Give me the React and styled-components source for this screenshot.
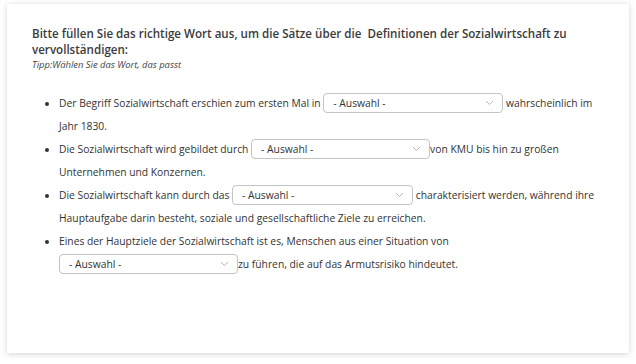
import React from 'react'
import styled, { createGlobalStyle } from 'styled-components'

const GlobalStyle = createGlobalStyle`
  html, body { margin: 0; padding: 0; background: #fff; }
  body { font-family: "Open Sans", "Liberation Sans", sans-serif; }
`

const options = ['- Auswahl -']

const Chevron = () => (
  <svg width="9" height="6" viewBox="0 0 9 6" fill="none">
    <path d="M1 1l3.5 3.5L8 1" stroke="#b5b5b5" strokeWidth="1" />
  </svg>
)

const Choice = ({ width = 180 }) => (
  <SelectBox style={{ width }}>
    <span>{options[0]}</span>
    <Chevron />
  </SelectBox>
)

const App = () => (
  <Page>
    <GlobalStyle />
    <Card>
      <Title>
        Bitte füllen Sie das richtige Wort aus, um die Sätze über die&nbsp; Definitionen der Sozialwirtschaft zu vervollständigen:
      </Title>
      <Tip>Tipp:Wählen Sie das Wort, das passt</Tip>
      <List>
        <Item>
          Der Begriff Sozialwirtschaft erschien zum ersten Mal in <Choice /> wahrscheinlich im Jahr 1830.
        </Item>
        <Item>
          Die Sozialwirtschaft wird gebildet durch <Choice width={179} />von KMU bis hin zu großen Unternehmen und Konzernen.
        </Item>
        <Item>
          Die Sozialwirtschaft kann durch das <Choice width={181} /> charakterisiert werden, während ihre Hauptaufgabe darin besteht, soziale und gesellschaftliche Ziele zu erreichen.
        </Item>
        <Item>
          Eines der Hauptziele der Sozialwirtschaft ist es, Menschen aus einer Situation von <Choice width={179} />zu führen, die auf das Armutsrisiko hindeutet.
        </Item>
      </List>
    </Card>
  </Page>
)

export default App

const Page = styled.div`
  width: 636px;
  height: 364px;
  padding: 4px 7px 0 7px;
  box-sizing: border-box;
`

const Card = styled.div`
  height: 349px;
  background: #fff;
  box-shadow: 0 1px 6px rgba(0, 0, 0, 0.18);
  padding: 22px 26px 0 25px;
  box-sizing: border-box;
`

const Title = styled.div`
  font-size: 11.6px;
  font-weight: 600;
  color: #3b3b3b;
  line-height: 16px;
`

const Tip = styled.div`
  font-size: 9.4px;
  font-style: italic;
  font-weight: 400;
  color: #444;
  line-height: 13px;
`

const List = styled.ul`
  margin: 21px 0 0 0;
  padding: 0 0 0 27px;
  font-size: 10.3px;
  color: #333;
  line-height: 23px;
`

const Item = styled.li`
  margin: 0;
  &::marker { font-size: 10px; }
`

const SelectBox = styled.span`
  display: inline-flex;
  align-items: center;
  justify-content: space-between;
  height: 20px;
  box-sizing: border-box;
  padding: 0 8px 0 9px;
  border: 1px solid #c4c4c4;
  border-radius: 4px;
  vertical-align: middle;
  color: #333;
  line-height: 18px;
  margin-top: -2px;
`
